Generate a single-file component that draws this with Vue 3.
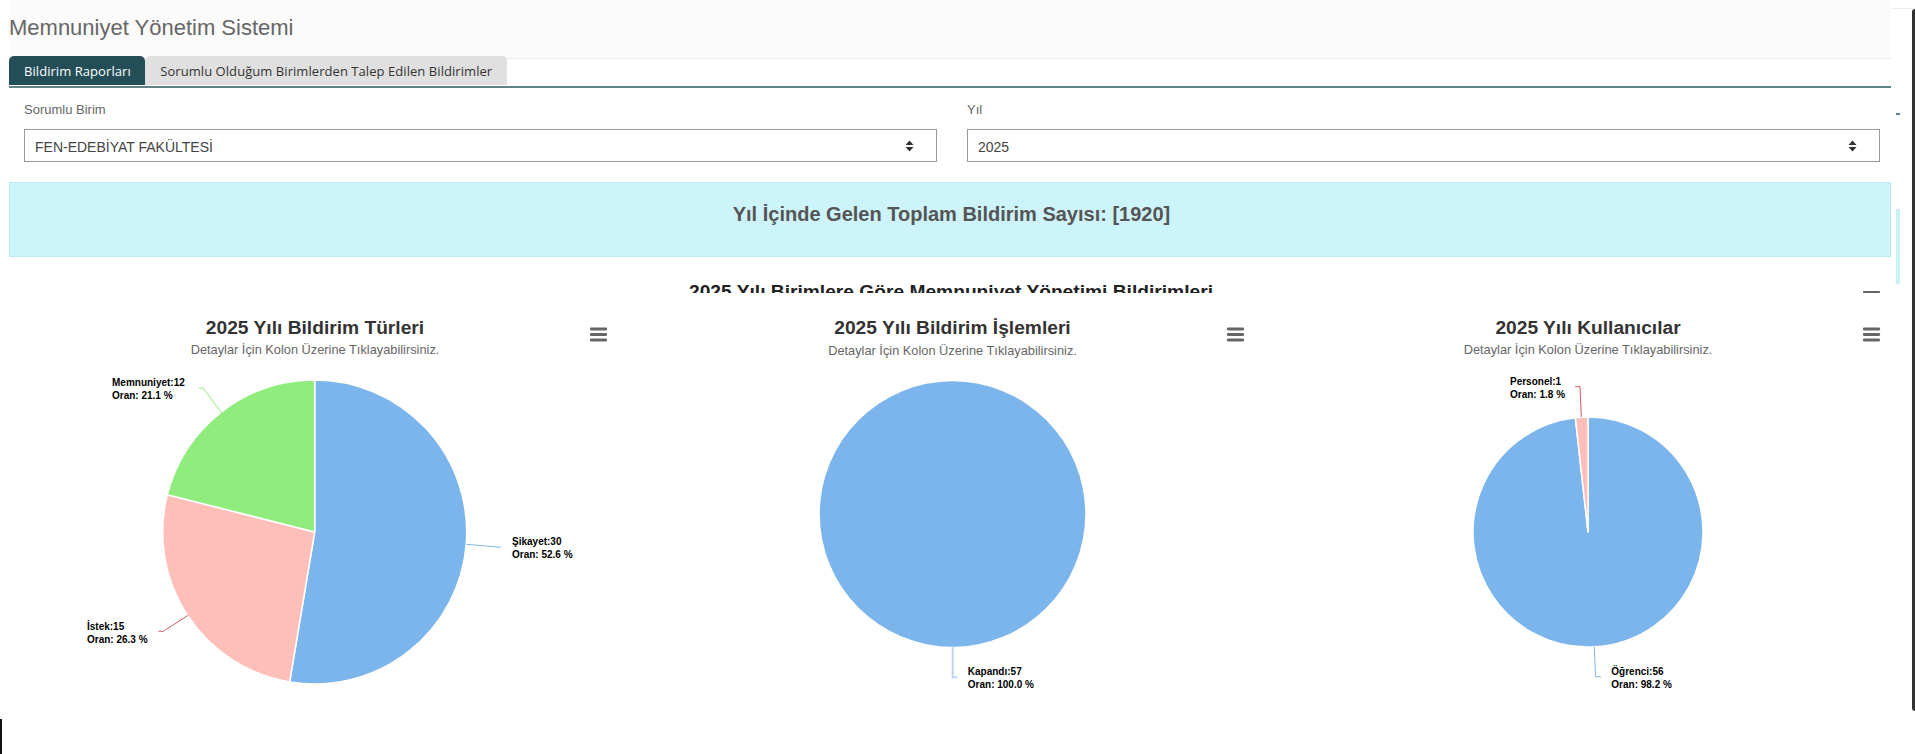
<script setup>
const BLUE = '#7cb5ec'
const PINK = '#ffbfb9'
const GREEN = '#90ed7d'

function slice(cx, cy, r, a0, a1) {
  const p = (a) => {
    const t = (a * Math.PI) / 180
    return [(cx + r * Math.sin(t)).toFixed(2), (cy - r * Math.cos(t)).toFixed(2)]
  }
  const [x0, y0] = p(a0)
  const [x1, y1] = p(a1)
  const large = a1 - a0 > 180 ? 1 : 0
  return `M${cx} ${cy}L${x0} ${y0}A${r} ${r} 0 ${large} 1 ${x1} ${y1}Z`
}

const charts = [
  {
    title: '2025 Yılı Bildirim Türleri',
    cx: 306,
    sub: 'Detaylar İçin Kolon Üzerine Tıklayabilirsiniz.',
    subY: 61,
    menuX: 581,
    slices: [
      { d: slice(305.7, 239, 152, 0, 189.47), fill: BLUE },
      { d: slice(305.7, 239, 152, 189.47, 284.21), fill: PINK },
      { d: slice(305.7, 239, 152, 284.21, 360), fill: GREEN },
    ],
    lines: [
      { d: 'M457.5 251.3L492 254.3', stroke: BLUE, w: 1 },
      { d: 'M149.4 338.3H154.3L179 322.3', stroke: '#c9605a', w: 1 },
      { d: 'M189.8 95H194L212.6 119.7', stroke: GREEN, w: 1 },
    ],
    labels: [
      { x: 503, y: 252, a: 'Şikayet:30', b: 'Oran: 52.6 %' },
      { x: 78, y: 337, a: 'İstek:15', b: 'Oran: 26.3 %' },
      { x: 103, y: 93, a: 'Memnuniyet:12', b: 'Oran: 21.1 %' },
    ],
  },
  {
    title: '2025 Yılı Bildirim İşlemleri',
    cx: 306.5,
    sub: 'Detaylar İçin Kolon Üzerine Tıklayabilirsiniz.',
    subY: 62,
    menuX: 581,
    circle: { cx: 306.5, cy: 221, r: 132.7, fill: BLUE },
    slices: [],
    lines: [{ d: 'M306.7 353.7V384.3H311.2', stroke: '#b9d6f3', w: 2 }],
    labels: [{ x: 321.8, y: 382, a: 'Kapandı:57', b: 'Oran: 100.0 %' }],
  },
  {
    title: '2025 Yılı Kullanıcılar',
    cx: 306,
    sub: 'Detaylar İçin Kolon Üzerine Tıklayabilirsiniz.',
    subY: 61,
    menuX: 581,
    slices: [
      { d: slice(306, 239, 115, 0, 353.68), fill: BLUE },
      { d: slice(306, 239, 115, 353.68, 360), fill: PINK },
    ],
    lines: [
      { d: 'M312.3 353.7L313.5 383.7H319', stroke: BLUE, w: 1 },
      { d: 'M299.3 124L298 93.7H293', stroke: '#c9605a', w: 1 },
    ],
    labels: [
      { x: 329.3, y: 382, a: 'Öğrenci:56', b: 'Oran: 98.2 %' },
      { x: 228, y: 92, a: 'Personel:1', b: 'Oran: 1.8 %' },
    ],
  },
]

const filters = [
  { label: 'Sorumlu Birim', value: 'FEN-EDEBİYAT FAKÜLTESİ' },
  { label: 'Yıl', value: '2025' },
]
</script>

<template>
  <div class="page">
    <main class="main">
      <header class="head">
        <h1>Memnuniyet Yönetim Sistemi</h1>
      </header>

      <nav class="tabs">
        <a class="tab active">Bildirim Raporları</a>
        <a class="tab">Sorumlu Olduğum Birimlerden Talep Edilen Bildirimler</a>
      </nav>

      <section class="filters">
        <div v-for="f in filters" :key="f.label" class="field">
          <label>{{ f.label }}</label>
          <div class="select">
            <span>{{ f.value }}</span>
            <svg width="9" height="12" viewBox="0 0 9 12">
              <path d="M4.5 0.5L8.5 5H0.5Z M4.5 11.5L0.5 7H8.5Z" fill="#333" />
            </svg>
          </div>
        </div>
      </section>

      <div class="banner">Yıl İçinde Gelen Toplam Bildirim Sayısı: [1920]</div>

      <div class="section-title">
        <h2>2025 Yılı Birimlere Göre Memnuniyet Yönetimi Bildirimleri</h2>
        <span class="clipped-menu"></span>
      </div>

      <div class="charts">
        <svg v-for="c in charts" :key="c.title" class="chart" width="612" height="461" viewBox="0 0 612 461">
          <text class="c-title" :x="c.cx" y="41" text-anchor="middle">{{ c.title }}</text>
          <text class="c-sub" :x="c.cx" :y="c.subY" text-anchor="middle">{{ c.sub }}</text>
          <g class="menu" :transform="`translate(${c.menuX} 35)`">
            <path d="M1.2 1H15.8M1.2 6.5H15.8M1.2 12H15.8" />
          </g>
          <circle v-if="c.circle" :cx="c.circle.cx" :cy="c.circle.cy" :r="c.circle.r" :fill="c.circle.fill" />
          <path v-for="(s, i) in c.slices" :key="i" :d="s.d" :fill="s.fill" stroke="#fff" stroke-width="1.5" stroke-linejoin="round" />
          <path v-for="(l, i) in c.lines" :key="'l' + i" :d="l.d" :stroke="l.stroke" :stroke-width="l.w" fill="none" />
          <g v-for="(t, i) in c.labels" :key="'t' + i" class="c-label">
            <text :x="t.x" :y="t.y">{{ t.a }}</text>
            <text :x="t.x" :y="t.y + 13">{{ t.b }}</text>
          </g>
        </svg>
      </div>
    </main>

    <div class="ghost-line"></div>
    <div class="ghost-dash"></div>
    <div class="ghost-banner"></div>
    <div class="edge-right"></div>
    <div class="edge-left"></div>
  </div>
</template>

<style>
html,
body {
  margin: 0;
  background: #fff;
}
</style>

<style scoped>
.page {
  position: relative;
  width: 1915px;
  height: 754px;
  overflow: hidden;
  background: #fff;
  font-family: "Liberation Sans", Arial, sans-serif;
  color: #333;
}
.main {
  display: flex;
  flex-direction: column;
  width: 1882px;
  margin-left: 9px;
}
.head {
  display: flex;
  align-items: center;
  height: 59px;
  box-sizing: border-box;
  padding-bottom: 2px;
  background: #fbfbfb;
  border-bottom: 1px solid #eee;
}
h1 {
  margin: 0;
  font-size: 22px;
  font-weight: 400;
  color: #666;
}
.tabs {
  position: relative;
  display: flex;
  height: 32px;
  box-sizing: border-box;
  margin-top: -3px;
  border-bottom: 2px solid #5f8188;
}
.tab {
  display: flex;
  align-items: center;
  height: 29px;
  padding: 0 14.5px 0 15px;
  border-radius: 5px 5px 0 0;
  background: #e0e0e0;
  font-family: "Open Sans", sans-serif;
  font-size: 13px;
  letter-spacing: 0.06px;
  color: #333;
}
.tab.active {
  background: #234e57;
  color: #fff;
}
.filters {
  display: grid;
  grid-template-columns: 913px 913px;
  column-gap: 30px;
  padding: 12px 15px 0;
}
.field label {
  display: block;
  height: 29px;
  font-size: 13px;
  line-height: 20px;
  color: #666;
}
.select {
  display: flex;
  align-items: center;
  justify-content: space-between;
  height: 33px;
  box-sizing: border-box;
  padding: 2px 22px 0 10px;
  border: 1px solid #999;
  font-size: 14px;
  color: #444;
}
.select svg {
  margin-top: -2px;
}
.banner {
  display: flex;
  justify-content: center;
  height: 75px;
  box-sizing: border-box;
  margin-top: 20px;
  padding: 20px 0 0 3px;
  background: #cdf3fb;
  border: 1px solid #bce9f2;
  font-size: 20px;
  font-weight: 700;
  line-height: 23px;
  color: #555;
}
.section-title {
  position: relative;
  height: 36px;
  overflow: hidden;
}
h2 {
  margin: 24px 0 0;
  padding-left: 2px;
  text-align: center;
  font-size: 19.2px;
  font-weight: 700;
  line-height: 21px;
  color: #222;
}
.clipped-menu {
  position: absolute;
  top: 34px;
  left: 1854px;
  width: 17px;
  height: 3px;
  border-radius: 1px;
  background: #666;
}
.charts {
  display: grid;
  grid-template-columns: repeat(3, 612px);
  column-gap: 24.5px;
}
.chart {
  display: block;
}
.c-title {
  font-size: 19.2px;
  font-weight: 700;
  fill: #333;
}
.c-sub {
  font-size: 12.8px;
  fill: #666;
}
.menu path {
  fill: none;
  stroke: #666;
  stroke-width: 2.8;
  stroke-linecap: round;
}
.c-label {
  font-size: 10px;
  font-weight: 700;
  fill: #000;
}
.ghost-line {
  position: absolute;
  top: 8px;
  left: 1892px;
  width: 23px;
  height: 1px;
  background: #eee;
}
.ghost-dash {
  position: absolute;
  top: 113px;
  left: 1896px;
  width: 4px;
  height: 2px;
  background: #5f8188;
}
.ghost-banner {
  position: absolute;
  top: 209px;
  left: 1896px;
  width: 4px;
  height: 75px;
  background: #c8f1f9;
}
.edge-right {
  position: absolute;
  top: 9px;
  left: 1912px;
  width: 3px;
  height: 702px;
  border-radius: 3px 0 0 3px;
  background: #333;
}
.edge-left {
  position: absolute;
  top: 719px;
  left: 0;
  width: 2px;
  height: 35px;
  background: #111;
}
</style>
